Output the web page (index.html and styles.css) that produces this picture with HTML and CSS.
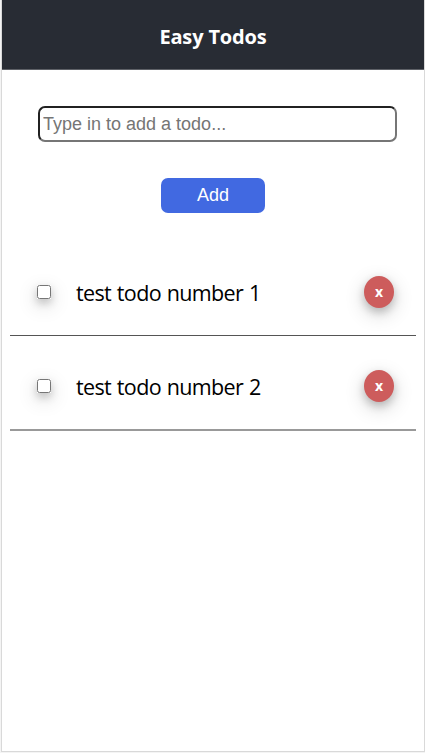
FILE: index.html
```html
<!DOCTYPE html>
<html lang="en">
<head>
<meta charset="utf-8">
<title>Easy Todos</title>
<link rel="stylesheet" href="styles.css">
</head>
<body>
<div class="app">
  <header class="header"><h1 class="title">Easy Todos</h1></header>
  <form class="form">
    <input class="field" type="text" placeholder="Type in to add a todo...">
    <button class="add" type="button">Add</button>
  </form>
  <ul class="list">
    <li class="todo"><input class="check" type="checkbox"><span class="text">test todo number 1</span><button class="remove" type="button">x</button></li>
    <li class="todo"><input class="check" type="checkbox"><span class="text">test todo number 2</span><button class="remove" type="button">x</button></li>
  </ul>
</div>
</body>
</html>
```
FILE: styles.css
```css
* { box-sizing: border-box; }
body { margin: 0; background: #f4f4f4; color: #000; font-family: "Open Sans", "Noto Sans", sans-serif; }
.app { height: 752px; margin-left: 1px; background: #fff; border: 1px solid #d9d9d9; border-top: 0; }
.header { height: 70px; display: flex; align-items: center; justify-content: center; padding-top: 4px; background: #282c34; border-bottom: 1px solid #5e6167; color: #fff; }
.title { margin: 0; font-size: 20px; line-height: 27px; font-weight: 700; letter-spacing: -0.15px; }
.form { display: flex; flex-direction: column; align-items: center; padding-top: 36px; }
.field { width: 359px; height: 36px; margin-left: 9px; padding: 1px 2px 1px 3px; border: 2px inset #767676; border-radius: 7px; font: 18px "Liberation Sans", sans-serif; }
.field::placeholder { color: #757575; }
.add { width: 104px; height: 35px; margin-top: 36px; padding: 0; border: 0; border-radius: 7px; background: #4169e1; color: #fff; font: 18px "Liberation Sans", sans-serif; }
.list { list-style: none; margin: 36px 8px 0; padding: 0; }
.todo { display: flex; align-items: center; height: 87px; padding: 0 22px 0 27px; border-bottom: 1px solid #555; }
.todo + .todo { height: 95px; padding-top: 6px; border-bottom: 2px solid #999; }
.check { width: 14px; height: 14px; margin: 0 25px 0 0; }
.check, .remove { box-shadow: 0 4px 8px rgba(0,0,0,.2), 0 6px 20px rgba(0,0,0,.19); }
.text { flex: 1; padding-top: 2px; font-size: 21.5px; line-height: 30px; font-weight: 400; letter-spacing: -0.64px; word-spacing: 0.8px; }
.remove { width: 30px; height: 32px; padding: 0 0 1px; border: 0; border-radius: 50%; background: #cd5c5c; color: #fff; font: 700 14px "Open Sans", sans-serif; }
```
